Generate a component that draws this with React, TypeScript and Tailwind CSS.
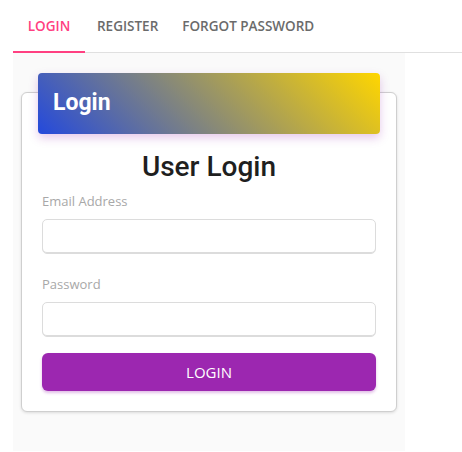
import { useState } from "react";

const tabs = ["Login", "Register", "Forgot Password"];

export default function App() {
  const [active, setActive] = useState(0);

  return (
    <div className="h-[452px] w-[462px] overflow-hidden bg-white font-['Open_Sans',sans-serif]">
      <div className="ml-[13px]">
        {/* Tabs */}
        <div className="flex h-[53px] border-b border-[#e0e0e0]">
          {tabs.map((t, i) => (
            <button
              key={t}
              onClick={() => setActive(i)}
              className={
                "relative flex min-w-[72px] items-center justify-center px-3 pt-px text-[13.5px] font-semibold uppercase " +
                (i === active ? "text-[#ff4081]" : "text-[#6b6b6b]")
              }
            >
              {t}
              {i === active && <span className="absolute bottom-[-1px] left-0 right-0 h-[2px] bg-[#ff4081]" />}
            </button>
          ))}
        </div>

        {/* Panel */}
        <div className="w-[392px] bg-[#fafafa] px-2 pb-[39px] pt-[39px]">
          <div className="rounded-md border border-[#cfcfcf] bg-white pb-5 shadow-[0_1px_3px_rgba(0,0,0,0.12)]">
            <div className="mx-4 -mt-5 flex h-[61px] items-center rounded-[4px] bg-linear-45/srgb from-[#2449dc] to-[#ffd600] px-[15px] shadow-[0_4px_10px_rgba(156,39,176,0.25)]">
              <span className="font-['Roboto',sans-serif] text-[23px] font-bold text-white">Login</span>
            </div>

            <h1 className="mt-[15px] text-center font-['Roboto',sans-serif] text-[28px] font-medium leading-[36px] text-[#1f1f1f]">
              User Login
            </h1>

            <form className="px-5" onSubmit={(e) => e.preventDefault()}>
              <label className="mt-[7px] block text-[13px] leading-[18px] text-[#a8a8a8]">Email Address</label>
              <input
                type="email"
                className="mt-[9px] block h-[35px] w-full rounded-[5px] border border-[#dcdcdc] px-3 text-sm shadow-[inset_0_-1px_0_#dcdcdc] outline-none"
              />
              <label className="mt-[21px] block text-[13px] leading-[18px] text-[#a8a8a8]">Password</label>
              <input
                type="password"
                className="mt-[9px] block h-[35px] w-full rounded-[5px] border border-[#dcdcdc] px-3 text-sm shadow-[inset_0_-1px_0_#dcdcdc] outline-none"
              />
              <button
                type="submit"
                className="mt-4 flex h-[38px] w-full items-center justify-center rounded-[6px] bg-[#9c27b0] text-[15px] text-white shadow-[0_2px_3px_rgba(156,39,176,0.3)]"
              >
                LOGIN
              </button>
            </form>
          </div>
        </div>
      </div>
    </div>
  );
}
